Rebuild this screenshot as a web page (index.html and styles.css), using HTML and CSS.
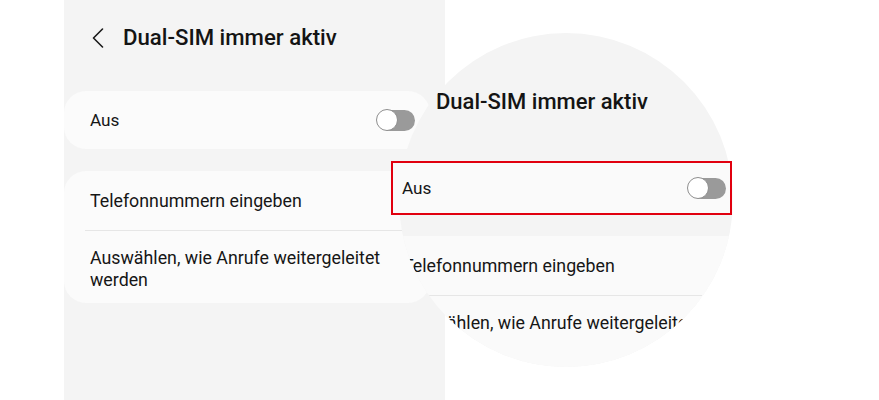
FILE: index.html
```html
<!DOCTYPE html>
<html lang="de">
<head>
<meta charset="utf-8">
<title>Dual-SIM immer aktiv</title>
<link rel="stylesheet" href="styles.css">
</head>
<body>
<div class="stage">
  <section class="panel">
    <header class="header">
      <svg class="back" width="12" height="20" viewBox="0 0 12 20"><path d="M10.5 1 L1.5 10 L10.5 19" fill="none" stroke="#1a1a1a" stroke-width="1.6" stroke-linecap="round" stroke-linejoin="round"/></svg>
      <h1 class="title">Dual-SIM immer aktiv</h1>
    </header>
    <div class="card card-switch">
      <span class="label">Aus</span>
      <span class="toggle"><span class="thumb"></span><span class="track"></span></span>
    </div>
    <div class="card card-list">
      <div class="row row-single"><span class="label">Telefonnummern eingeben</span></div>
      <div class="divider"></div>
      <div class="row row-double"><span class="label">Auswählen, wie Anrufe weitergeleitet werden</span></div>
    </div>
  </section>

  <div class="lens">
    <div class="lens-clip">
      <div class="lens-title">Dual-SIM immer aktiv</div>
      <div class="lens-band"></div>
      <div class="lens-card">
        <div class="lens-row1"><span class="label">Telefonnummern eingeben</span></div>
        <div class="lens-divider"></div>
        <div class="lens-row2"><span class="label">Auswählen, wie Anrufe weitergeleitet werden</span></div>
      </div>
    </div>
    <div class="highlight">
      <span class="label">Aus</span>
      <span class="toggle"><span class="thumb"></span><span class="track"></span></span>
    </div>
  </div>
</div>
</body>
</html>
```

FILE: styles.css
```css
* { box-sizing: border-box; }
html, body { margin: 0; padding: 0; }
body {
  background: #ffffff;
  font-family: Roboto, "Noto Sans", "Liberation Sans", sans-serif;
  color: #161616;
  width: 879px;
  height: 400px;
  overflow: hidden;
}
.stage {
  position: relative;
  width: 879px;
  height: 400px;
}
.panel {
  margin-left: 64px;
  width: 381px;
  height: 400px;
  background: #f4f4f4;
  display: flex;
  flex-direction: column;
}
.header {
  height: 74px;
  display: flex;
  align-items: center;
  padding-left: 28px;
}
.back { display: block; margin-right: 19px; margin-top: 1px; }
.title {
  margin: 0;
  font-size: 22.2px;
  font-weight: 500;
  color: #141414;
}
.label { font-size: 17.8px; line-height: 22px; color: #161616; }
.card {
  width: 366px;
  background: #fbfbfb;
  border-radius: 22px;
}
.card-switch {
  margin-top: 17px;
  height: 58px;
  display: flex;
  align-items: center;
  justify-content: space-between;
  padding: 0 15px 0 26px;
}
.card-switch .label, .highlight .label { font-size: 17.2px; }
.card-list {
  margin-top: 22px;
  height: 132px;
}
.row { padding-left: 26px; padding-right: 20px; }
.row-single { height: 59px; display: flex; align-items: center; }
.row-double { padding-top: 16px; }
.divider { height: 1px; background: #e6e6e6; margin: 0 20px 0 21px; }

.toggle {
  display: flex;
  align-items: center;
  width: 39px;
  height: 22px;
}
.thumb {
  width: 22px;
  height: 22px;
  border-radius: 50%;
  background: #ffffff;
  border: 1.5px solid #8e8e8e;
  flex: none;
  z-index: 1;
}
.track {
  width: 28px;
  height: 21px;
  margin-left: -11px;
  border-radius: 0 11px 11px 0;
  background: #9a9a9a;
  flex: none;
}

.lens {
  position: absolute;
  left: 399px;
  top: 33px;
  width: 334px;
  height: 334px;
}
.lens-clip {
  width: 334px;
  height: 334px;
  border-radius: 50%;
  overflow: hidden;
  background: #f4f4f4;
  display: flex;
  flex-direction: column;
}
.lens-title {
  padding: 57px 0 0 37px;
  font-size: 22px;
  font-weight: 500;
  line-height: 24px;
  color: #141414;
  white-space: nowrap;
}
.lens-band {
  margin-top: 47px;
  height: 54px;
  background: #fafafa;
  flex: none;
}
.lens-card {
  margin-top: 21px;
  flex: 1;
  background: #fafafa;
}
.lens-row1 {
  height: 59px;
  display: flex;
  align-items: center;
  padding-left: 4px;
}
.lens-divider { height: 1px; background: #e6e6e6; margin: 0 31px 0 26px; }
.lens-row2 {
  padding-top: 16px;
  margin-left: 4px;
  width: 280px;
  overflow: hidden;
  white-space: nowrap;
}
.highlight {
  position: absolute;
  left: -8px;
  top: 128px;
  width: 341px;
  height: 54px;
  border: 2px solid #e1000f;
  background: #fafafa;
  display: flex;
  align-items: center;
  justify-content: space-between;
  padding: 0 4px 0 9px;
}
```
